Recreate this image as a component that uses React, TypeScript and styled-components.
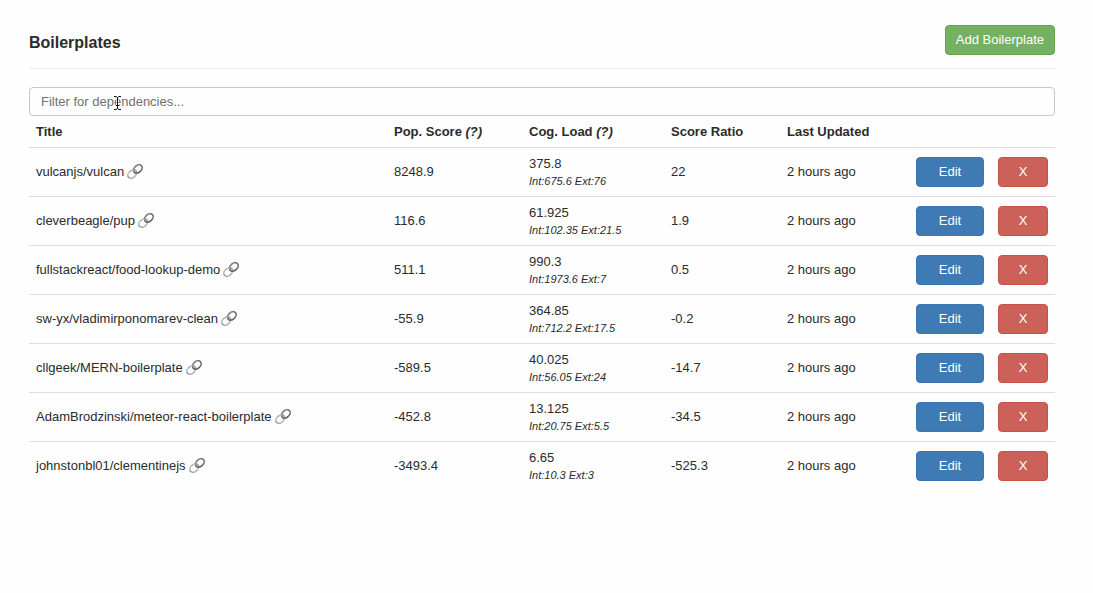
import React from "react";
import styled, { createGlobalStyle } from "styled-components";

const GlobalStyle = createGlobalStyle`
  *, *::before, *::after { box-sizing: border-box; }
  body {
    margin: 0;
    background: #fefefe;
    color: #2b2b2b;
    font-family: "Helvetica Neue", "Liberation Sans", Arial, sans-serif;
    font-size: 13px;
    line-height: 18px;
  }
`;

const Page = styled.main`
  padding: 25px 38px 25px 29px;
`;

const Header = styled.header`
  display: flex;
  justify-content: space-between;
  align-items: center;
  padding-bottom: 13px;
  margin-bottom: 18px;
  border-bottom: 1px solid #eee;
`;

const Heading = styled.h4`
  margin: 0;
  padding-top: 6px;
  font-size: 16px;
  font-weight: 700;
  line-height: 18px;
`;

const tones = {
  success: { fill: "#74b160", edge: "#67a84f" },
  primary: { fill: "#3e7ab3", edge: "#3a75ae" },
  danger: { fill: "#cb6158", edge: "#c55246" },
};

const Button = styled.button<{ $tone: keyof typeof tones; $block?: boolean }>`
  display: block;
  width: ${(p) => (p.$block ? "100%" : "auto")};
  height: 30px;
  padding: 0 10px;
  border: 1px solid ${(p) => tones[p.$tone].edge};
  border-radius: 4px;
  background: ${(p) => tones[p.$tone].fill};
  color: #fff;
  font: inherit;
  white-space: nowrap;
  cursor: pointer;
`;

const FilterField = styled.div`
  position: relative;
`;

const FilterInput = styled.input`
  display: block;
  width: 100%;
  height: 29px;
  padding: 0 11px;
  border: 1px solid #c8c8c8;
  border-radius: 4px;
  background: #fefefe;
  color: #555;
  font: inherit;
  &::placeholder { color: #707070; opacity: 1; }
`;

const Pointer = styled.svg`
  position: absolute;
  top: 8px;
  left: 84px;
  pointer-events: none;
`;

const Table = styled.table`
  width: 100%;
  table-layout: fixed;
  border-collapse: separate;
  border-spacing: 0;
`;

const Col = styled.col<{ $width?: number }>`
  width: ${(p) => (p.$width ? `${p.$width}px` : "auto")};
`;

const HeadCell = styled.th`
  height: 32px;
  padding: 0 7px;
  border-bottom: 1px solid #ddd;
  text-align: left;
  white-space: nowrap;
`;

const Cell = styled.td`
  height: 49px;
  padding: 0 7px;
  border-bottom: 1px solid #ddd;
  vertical-align: middle;
  white-space: nowrap;
  tr:last-child > & { border-bottom-color: transparent; }
`;

const Title = styled.div`
  display: flex;
  align-items: center;
  gap: 3px;
`;

const RepoLink = styled.a`
  display: flex;
`;

const Detail = styled.em`
  display: block;
  font-size: 11px;
  line-height: 16px;
`;

const ChainIcon = () => (
  <svg width="16" height="16" viewBox="0 0 16 16" fill="none" aria-hidden="true">
    <g transform="rotate(-42 8 7.5)">
      <ellipse cx="11.800" cy="7.500" rx="4.900" ry="3.500" stroke="#66646b" strokeWidth="1.500" />
      <path d="M7.800 6.200C9.500 3.700 13.500 3.600 15.400 5.300" stroke="#bdbbc0" strokeWidth="0.500" />
      <ellipse cx="4.200" cy="7.500" rx="4.900" ry="3.500" stroke="#9299a3" strokeWidth="1.500" />
      <path d="M-0.300 6.200C1.500 3.700 5.500 3.600 7.400 5.300M0.800 9.900c1.800 1.500 4.800 1.500 6.400 .2" stroke="#dfe4ea" strokeWidth="0.700" />
      <path d="M6.900 7.500C6.900 9.400 9.100 11 11.800 11" stroke="#66646b" strokeWidth="1.500" />
    </g>
  </svg>
);

const rows = [
  ["vulcanjs/vulcan", "8248.9", "375.8", "Int:675.6 Ext:76", "22"],
  ["cleverbeagle/pup", "116.6", "61.925", "Int:102.35 Ext:21.5", "1.9"],
  ["fullstackreact/food-lookup-demo", "511.1", "990.3", "Int:1973.6 Ext:7", "0.5"],
  ["sw-yx/vladimirponomarev-clean", "-55.9", "364.85", "Int:712.2 Ext:17.5", "-0.2"],
  ["cllgeek/MERN-boilerplate", "-589.5", "40.025", "Int:56.05 Ext:24", "-14.7"],
  ["AdamBrodzinski/meteor-react-boilerplate", "-452.8", "13.125", "Int:20.75 Ext:5.5", "-34.5"],
  ["johnstonbl01/clementinejs", "-3493.4", "6.65", "Int:10.3 Ext:3", "-525.3"],
];

export default function App() {
  return (
    <>
      <GlobalStyle />
      <Page>
        <Header>
          <Heading>Boilerplates</Heading>
          <Button type="button" $tone="success">Add Boilerplate</Button>
        </Header>
        <FilterField>
          <FilterInput
            type="text"
            aria-label="Filter for dependencies"
            placeholder="Filter for dependencies..."
          />
          <Pointer width="9" height="16" viewBox="0 0 9 16" fill="none" aria-hidden="true">
            <path d="M1 1.500h2l1.500 1L6 1.500h2M4.500 2.500v11M1 14.500h2l1.500-1 1.500 1h2M3 10.500h3" stroke="#fff" strokeWidth="2" />
            <path d="M1 1.500h2l1.500 1L6 1.500h2M4.500 2.500v11M1 14.500h2l1.500-1 1.500 1h2M3 10.500h3" stroke="#111" />
          </Pointer>
        </FilterField>
        <Table>
          <colgroup>
            <Col />
            <Col $width={135} />
            <Col $width={142} />
            <Col $width={116} />
            <Col $width={129} />
            <Col $width={82} />
            <Col $width={64} />
          </colgroup>
          <thead>
            <tr>
              <HeadCell scope="col">Title</HeadCell>
              <HeadCell scope="col">Pop. Score <em>(?)</em></HeadCell>
              <HeadCell scope="col">Cog. Load <em>(?)</em></HeadCell>
              <HeadCell scope="col">Score Ratio</HeadCell>
              <HeadCell scope="col">Last Updated</HeadCell>
              <HeadCell as="td" />
              <HeadCell as="td" />
            </tr>
          </thead>
          <tbody>
            {rows.map(([repo, score, load, detail, ratio]) => (
              <tr key={repo}>
                <Cell>
                  <Title>
                    {repo}
                    <RepoLink href={`https://github.com/${repo}`} aria-label={`Open ${repo}`}>
                      <ChainIcon />
                    </RepoLink>
                  </Title>
                </Cell>
                <Cell>{score}</Cell>
                <Cell>
                  {load}
                  <Detail>{detail}</Detail>
                </Cell>
                <Cell>{ratio}</Cell>
                <Cell>2 hours ago</Cell>
                <Cell><Button type="button" $tone="primary" $block>Edit</Button></Cell>
                <Cell><Button type="button" $tone="danger" $block>X</Button></Cell>
              </tr>
            ))}
          </tbody>
        </Table>
      </Page>
    </>
  );
}
